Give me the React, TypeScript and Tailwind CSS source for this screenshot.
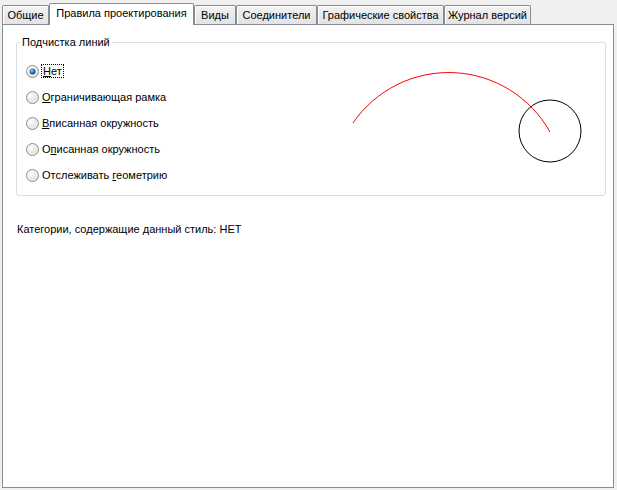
import React from "react";

const tabs = [
  { label: "Общие", w: "w-[47px]" },
  { label: "Правила проектирования", w: "w-[145px]", active: true },
  { label: "Виды", w: "w-[42px]" },
  { label: "Соединители", w: "w-[81px]" },
  { label: "Графические свойства", w: "w-[127px]" },
  { label: "Журнал версий", w: "w-[87px]" },
];

function Radio({ checked }: { checked?: boolean }) {
  return (
    <svg width="13" height="13" viewBox="0 0 13 13" className="shrink-0">
      <defs>
        <radialGradient id="rg" cx="0.35" cy="0.35" r="0.75">
          <stop offset="0" stopColor="#ffffff" />
          <stop offset="1" stopColor="#d6d6d6" />
        </radialGradient>
        <radialGradient id="rb" cx="0.4" cy="0.35" r="0.7">
          <stop offset="0" stopColor="#8fd0f4" />
          <stop offset="0.6" stopColor="#1f6fb2" />
          <stop offset="1" stopColor="#0b3e6e" />
        </radialGradient>
      </defs>
      <circle cx="6.5" cy="6.5" r="6" fill="url(#rg)" stroke="#8e8f8f" strokeWidth="1" />
      <circle cx="6.5" cy="6.5" r="4.5" fill="none" stroke="#f4f4f4" strokeWidth="1" />
      {checked && <circle cx="6.5" cy="6.5" r="3" fill="url(#rb)" />}
    </svg>
  );
}

function Option({ children, checked }: { children: React.ReactNode; checked?: boolean }) {
  return (
    <div className="flex items-center h-[26px]">
      <Radio checked={checked} />
      <span className="ml-[3px] leading-[13px] whitespace-nowrap">{children}</span>
    </div>
  );
}

export default function App() {
  return (
    <div
      className="w-[617px] h-[490px] bg-[#f0f0f0] pt-[3px] pl-[2px] pr-[3px] pb-[2px] flex flex-col text-[11px] text-black"
      style={{ fontFamily: '"Liberation Sans", Arial, sans-serif' }}
    >
      {/* Tab strip */}
      <div className="flex items-end h-[21px]">
        {tabs.map((t) =>
          t.active ? (
            <div
              key={t.label}
              className={`${t.w} h-[22px] -mb-px relative z-10 bg-white border border-b-0 border-[#898c95] rounded-t-[2px] flex items-center justify-center pb-[2px] whitespace-nowrap`}
            >
              {t.label}
            </div>
          ) : (
            <div
              key={t.label}
              className={`${t.w} h-[19px] bg-gradient-to-b from-[#f2f2f2] to-[#e3e3e3] border border-b-0 border-[#898c95] shadow-[inset_1px_1px_0_#ffffff] rounded-t-[2px] flex items-center justify-center pt-[1px] whitespace-nowrap`}
            >
              {t.label}
            </div>
          )
        )}
      </div>

      {/* Panel */}
      <div className="flex-1 bg-white border border-[#898c95] flex flex-col pl-[13px] pr-[7px] pt-[10px]">
        <fieldset className="border border-[#d5dfe5] rounded-[3px] h-[161px] flex px-0">
          <legend className="ml-[3px] px-[2px] leading-[14px]">Подчистка линий</legend>
          <div className="flex flex-col pt-[9px] pl-[9px]">
            <Option checked>
              <span className="outline outline-1 outline-dotted outline-black px-[1px]">
                <u>Н</u>ет
              </span>
            </Option>
            <Option>
              <u>О</u>граничивающая рамка
            </Option>
            <Option>
              <u>В</u>писанная окружность
            </Option>
            <Option>
              О<u>п</u>исанная окружность
            </Option>
            <Option>
              Отслеживать <u>г</u>еометрию
            </Option>
          </div>
          <svg width="260" height="150" viewBox="0 0 260 150" className="ml-auto mr-[5px] -mt-[6px]">
            <path d="M13 80 A116 116 0 0 1 210 89" fill="none" stroke="#ff0000" strokeWidth="1" />
            <circle cx="210" cy="88" r="31" fill="none" stroke="#000000" strokeWidth="1" />
          </svg>
        </fieldset>
        <div className="mt-[27px] ml-[1px] leading-[13px]">
          Категории, содержащие данный стиль: НЕТ
        </div>
      </div>
    </div>
  );
}
